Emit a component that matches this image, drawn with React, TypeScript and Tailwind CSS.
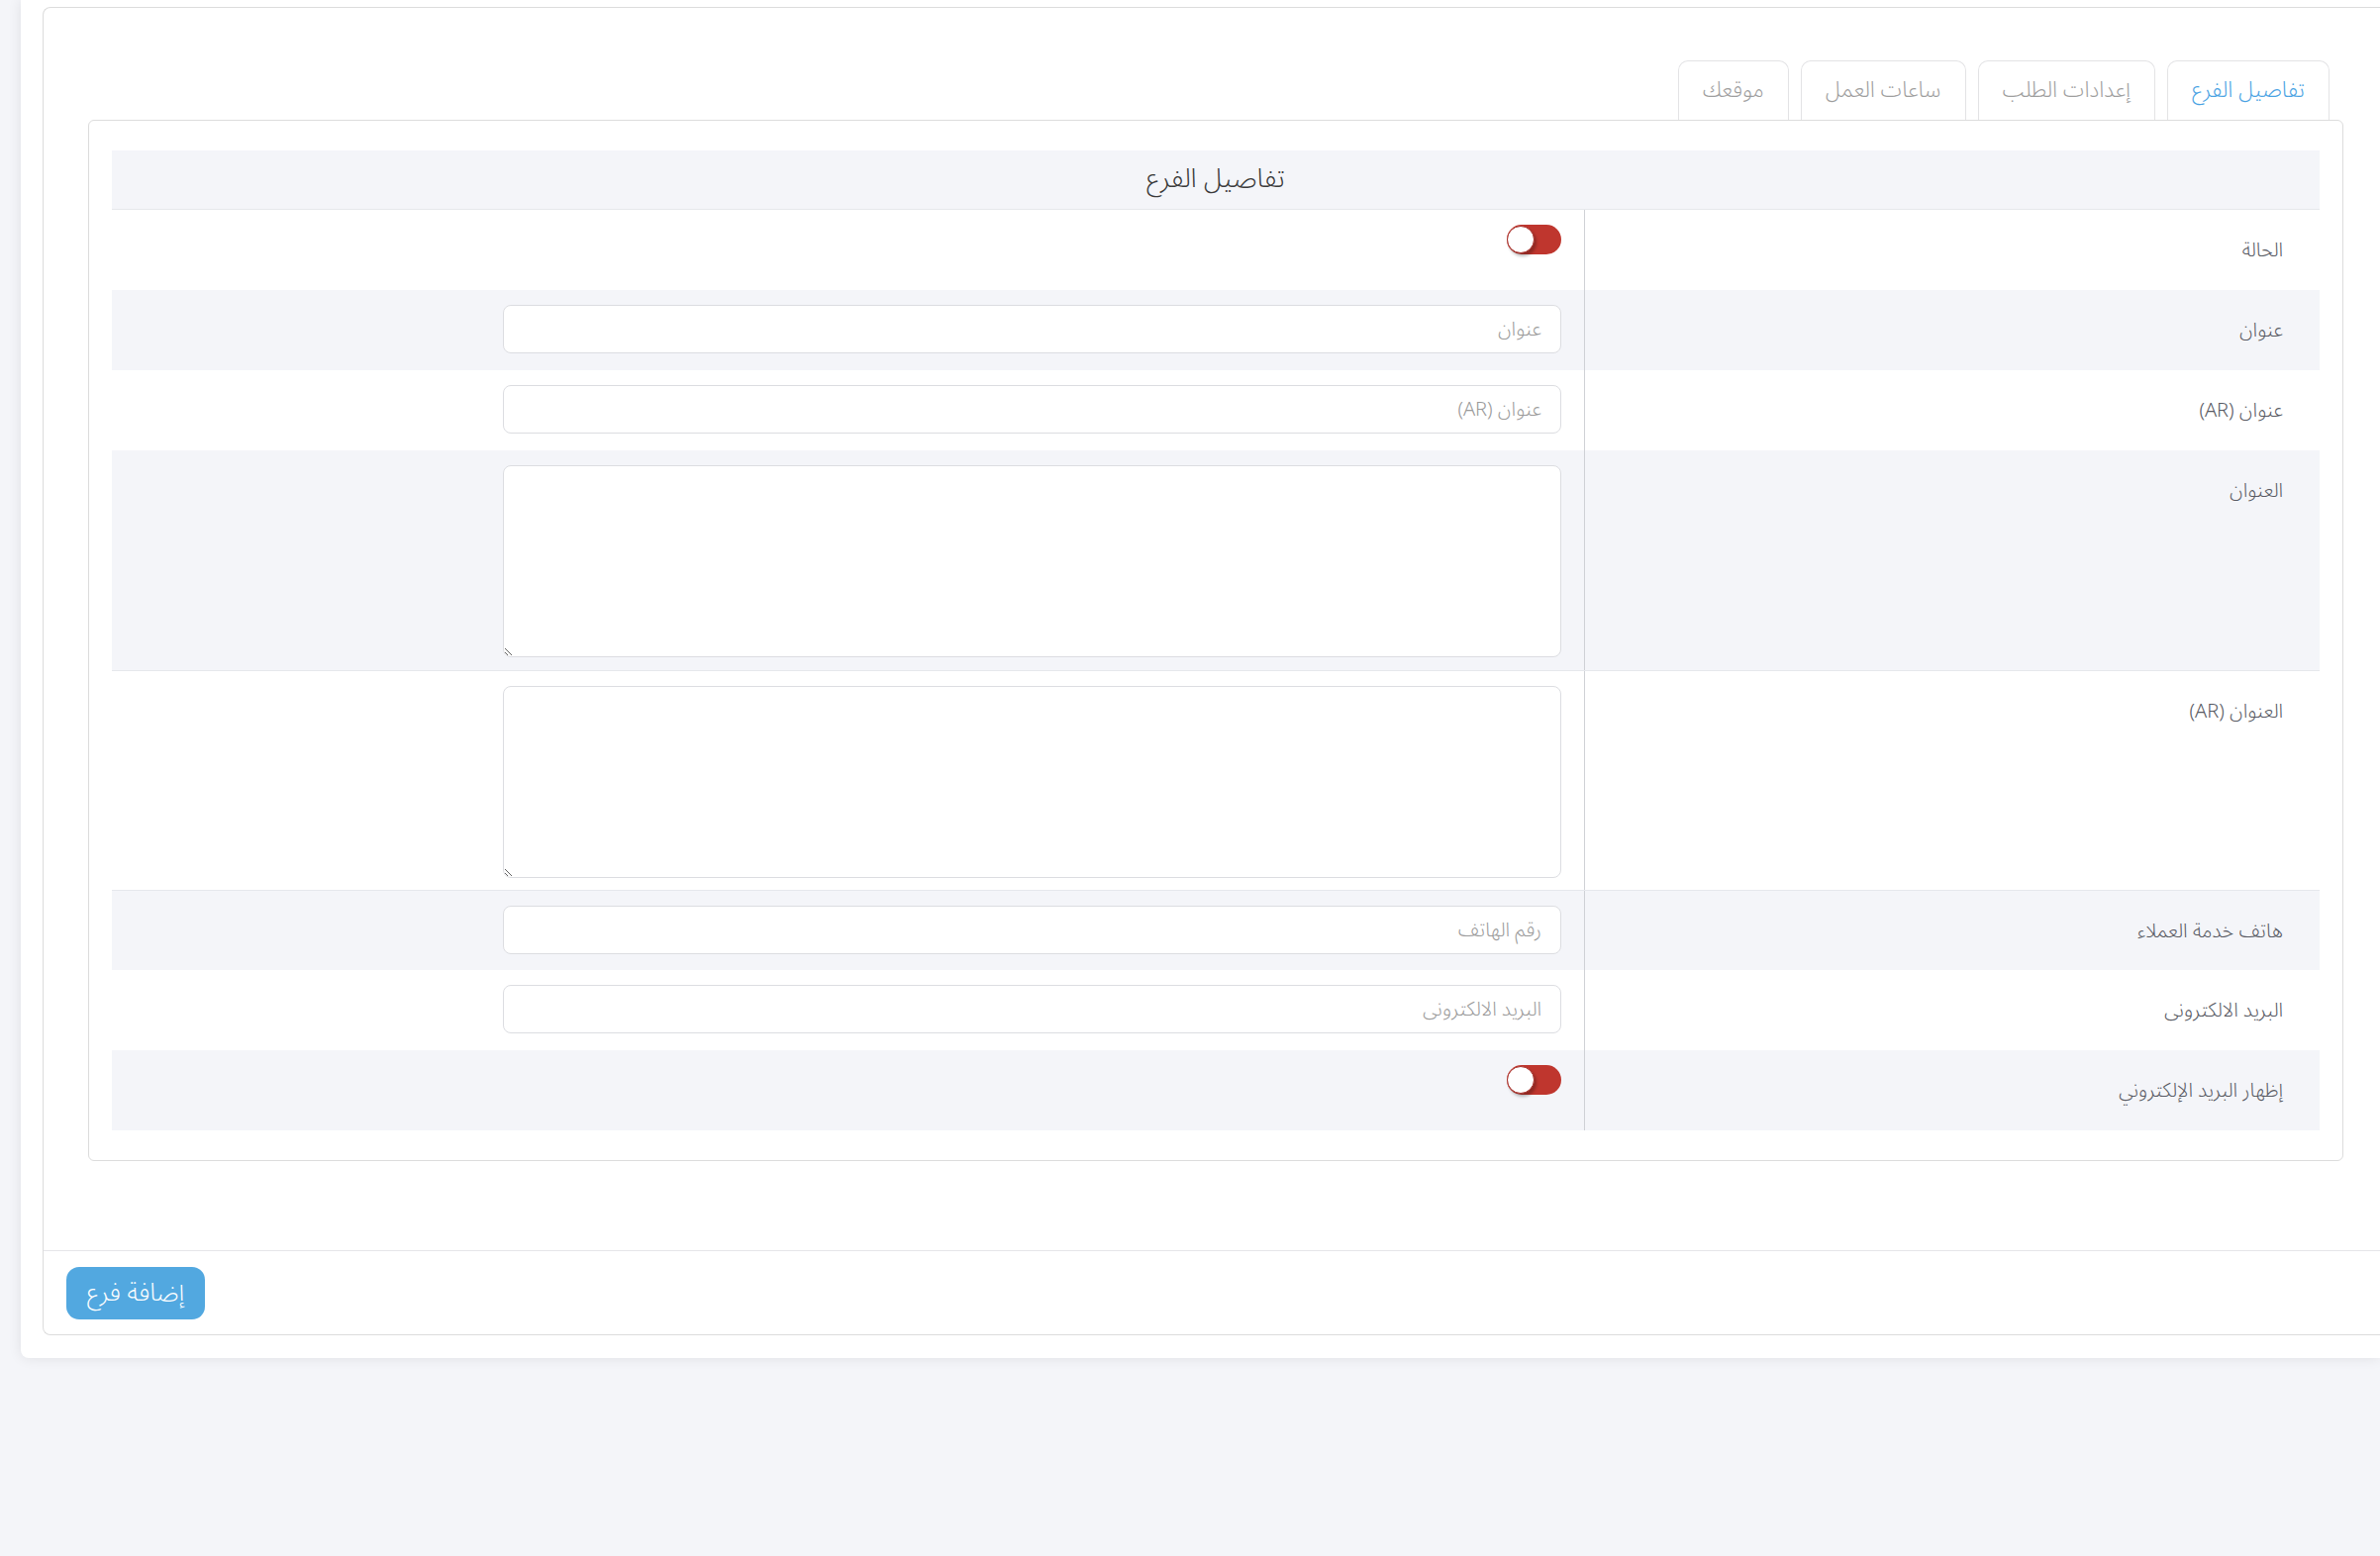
import React from 'react';

const FONT = { fontFamily: '"Noto Sans Arabic", "Noto Sans", "DejaVu Sans", sans-serif' };

const tabs = [
  { label: 'تفاصيل الفرع', active: true },
  { label: 'إعدادات الطلب' },
  { label: 'ساعات العمل' },
  { label: 'موقعك' },
];

function Toggle() {
  return (
    <div className="relative w-[55px] h-[30px] rounded-full bg-[#bf362e]">
      <span className="absolute left-0 top-[1px] w-[28px] h-[28px] rounded-full bg-white border border-[#a8302a] shadow-[2px_3px_3px_rgba(0,0,0,0.25)]" />
    </div>
  );
}

function Row({
  label,
  grey,
  tall,
  bordered,
  children,
}: {
  label: string;
  grey?: boolean;
  tall?: boolean;
  bordered?: boolean;
  children: React.ReactNode;
}) {
  return (
    <div
      className={`flex ${tall ? 'h-[222px]' : 'h-[81px]'} ${grey ? 'bg-[#f4f5f9]' : 'bg-white'} ${
        bordered ? 'border-t border-[#e6e8ec]' : ''
      }`}
    >
      <div className="w-[743px] shrink-0 border-l border-[#cfd1d6] pr-[37px] pt-[26px] text-[20px] leading-[30px] font-light text-[#575962]">
        {label}
      </div>
      <div className="flex-1 pr-[23px] pt-[15px]">{children}</div>
    </div>
  );
}

function Input({ placeholder }: { placeholder: string }) {
  return (
    <input
      dir="rtl"
      placeholder={placeholder}
      className="block w-[1069px] h-[49px] rounded-[8px] border border-[#dcdde1] bg-white px-[19px] text-[20px] font-light text-[#575962] placeholder:text-[#9a9a9a] outline-none"
      style={FONT}
    />
  );
}

function Area() {
  return (
    <textarea
      dir="rtl"
      className="block w-[1069px] h-[194px] rounded-[8px] border border-[#dcdde1] bg-white px-[19px] py-[10px] text-[20px] font-light outline-none"
      style={FONT}
    />
  );
}

export default function App() {
  return (
    <div dir="rtl" className="min-h-screen bg-[#f4f5f9] overflow-hidden" style={FONT}>
      <div className="ml-[21px] bg-white pt-[7px] pb-[23px] pl-[22px] rounded-bl-[8px] shadow-[0_0_14px_rgba(0,0,0,0.09)]">
        <div className="border border-r-0 border-[#dcdcdc] rounded-l-[8px]">
          <div className="pt-[53px] pr-[37px] pl-[45px] pb-[90px]">
            <div className="flex gap-[12px] mr-[14px]">
              {tabs.map((t) => (
                <div
                  key={t.label}
                  className={`h-[60px] flex items-center px-[24px] border border-b-0 border-[#e3e3e5] rounded-t-[10px] text-[22px] font-light ${
                    t.active ? 'text-[#4ba3e3]' : 'text-[#9e9e9e]'
                  }`}
                >
                  {t.label}
                </div>
              ))}
            </div>
            <div className="border border-[#dcdcdc] rounded-[6px] px-[23px] pt-[30px] pb-[30px]">
              <div className="h-[60px] flex items-center justify-center bg-[#f4f5f9] border-b border-[#e6e8ec] text-[27px] font-light text-[#3a3a3a]">
                تفاصيل الفرع
              </div>
              <Row label="الحالة">
                <Toggle />
              </Row>
              <Row label="عنوان" grey>
                <Input placeholder="عنوان" />
              </Row>
              <Row label="عنوان (AR)">
                <Input placeholder="عنوان (AR)" />
              </Row>
              <Row label="العنوان" grey tall>
                <Area />
              </Row>
              <Row label="العنوان (AR)" tall bordered>
                <Area />
              </Row>
              <Row label="هاتف خدمة العملاء" grey bordered>
                <Input placeholder="رقم الهاتف" />
              </Row>
              <Row label="البريد الالكترونى">
                <Input placeholder="البريد الالكترونى" />
              </Row>
              <Row label="إظهار البريد الإلكتروني" grey>
                <Toggle />
              </Row>
            </div>
          </div>
          <div className="border-t border-[#e6e6e9] pt-[16px] pb-[15px] pl-[23px] flex justify-end">
            <button className="w-[140px] h-[53px] rounded-[13px] bg-[#52a8e0] text-white text-[25px] font-light" style={FONT}>
              إضافة فرع
            </button>
          </div>
        </div>
      </div>
    </div>
  );
}
